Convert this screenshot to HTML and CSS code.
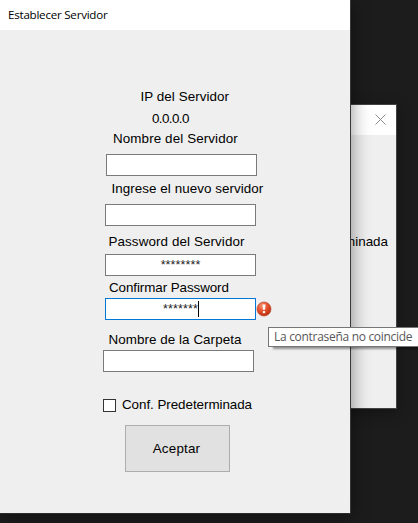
FILE: index.html
```html
<!DOCTYPE html>
<html lang="es">
<head>
<meta charset="utf-8">
<title>Establecer Servidor</title>
<link rel="stylesheet" href="styles.css">
</head>
<body>
<main class="desktop">
  <section class="window back-window">
    <header class="back-title">
      <svg class="close" viewBox="0 0 11 11"><path d="M.5.5l10 10M10.5.5l-10 10"/></svg>
    </header>
    <div class="back-body"><span class="back-label">Conf. Predeterminada</span></div>
  </section>
  <section class="window main-window">
    <header class="title"><span>Establecer Servidor</span></header>
    <form class="form">
      <label class="text ip-label">IP del Servidor</label>
      <span class="text ip-value">0.0.0.0</span>
      <label class="text name-label">Nombre del Servidor</label>
      <div class="field name-field"></div>
      <label class="text new-label">Ingrese el nuevo servidor</label>
      <div class="field new-field"></div>
      <label class="text pass-label">Password del Servidor</label>
      <div class="field pass-field"><span class="stars">********</span></div>
      <label class="text confirm-label">Confirmar Password</label>
      <div class="confirm-row">
        <div class="field focused"><span class="stars">*******</span><i class="caret"></i></div>
        <svg class="error" viewBox="0 0 16 16">
          <defs><radialGradient id="red" cx=".38" cy=".28" r=".75"><stop offset="0" stop-color="#f99570"/><stop offset=".5" stop-color="#e5512c"/><stop offset="1" stop-color="#b92b0c"/></radialGradient></defs>
          <circle cx="8" cy="8" r="7" fill="url(#red)" stroke="#b94a30" stroke-width=".7"/>
          <path d="M6.5 3.5h3l-.5 5.3H7z" fill="#fff"/><rect x="6.8" y="10" width="2.4" height="2.3" rx=".8" fill="#fff"/>
        </svg>
      </div>
      <label class="text folder-label">Nombre de la Carpeta</label>
      <div class="field folder-field"></div>
      <div class="check-row"><i class="checkbox"></i><label class="text check-label">Conf. Predeterminada</label></div>
      <button class="accept" type="button"><span class="text accept-text">Aceptar</span></button>
    </form>
  </section>
  <div class="tooltip"><span>La contraseña no coincide</span></div>
</main>
</body>
</html>
```
FILE: styles.css
```css
* { box-sizing: border-box; }
body { margin: 0; background: #1c1c1c; }
.desktop {
  position: relative;
  width: 418px;
  height: 523px;
  overflow: hidden;
  background: #1c1c1c;
  color: #000;
  font: 13.4px/16px "Liberation Sans", Arial, sans-serif;
}
.window { position: absolute; background: #efefef; }
.main-window {
  left: 0;
  top: 0;
  width: 351px;
  height: 514px;
  border-right: 1px solid #3a3a3a;
  border-bottom: 1px solid #2c2c2c;
  box-shadow: 0 2px 18px rgba(0, 0, 0, .45);
}
.back-window {
  left: 200px;
  top: 104px;
  width: 197px;
  height: 305px;
  border: 1px solid #424242;
  box-shadow: 0 4px 14px rgba(0, 0, 0, .3);
}
.back-title {
  display: flex;
  justify-content: flex-end;
  height: 30px;
  padding: 9px 10px 0 0;
  background: #fff;
}
.close { width: 11px; height: 11px; fill: none; stroke: #8c8c8c; stroke-width: 1; }
.back-body { display: flex; justify-content: flex-end; padding: 99px 8px 0 0; }
.back-label { white-space: nowrap; }
.title {
  display: flex;
  align-items: center;
  height: 30px;
  padding-left: 8px;
  background: #fff;
  font: 11.6px/16px "Open Sans", "Noto Sans", sans-serif;
}
.title span { letter-spacing: -.24px; }
.form { display: flex; flex-direction: column; align-items: flex-start; padding-top: 59px; }
.text { height: 16px; white-space: nowrap; }
.field {
  display: flex;
  justify-content: center;
  width: 151px;
  height: 22px;
  flex: none;
  border: 1px solid #7a7a7a;
  background: #fff;
}
.ip-label { margin-left: 140.5px; letter-spacing: .06px; }
.ip-value { margin: 6px 0 4px 152px; letter-spacing: -.6px; }
.name-label { margin-left: 113px; letter-spacing: .11px; }
.name-field { margin: 7px 0 5px 106px; }
.new-label { margin-left: 111.5px; letter-spacing: .06px; }
.new-field { margin: 7px 0 8px 105px; }
.pass-label { margin-left: 108.5px; letter-spacing: .1px; }
.pass-field { margin: 4px 0 4px 105px; }
.confirm-label { margin: 0 0 2px 109px; letter-spacing: -.08px; }
.confirm-row { display: flex; align-items: center; margin-left: 105px; }
.folder-label { margin: 12px 0 2px 108.5px; letter-spacing: .06px; }
.folder-field { margin-left: 103px; }
.focused { padding-left: 1px; border-color: #0078d7; }
.stars { font-size: 12.5px; line-height: 20px; letter-spacing: .1px; color: #222; }
.caret { width: 1px; height: 16px; margin-top: 2px; background: #000; }
.error { width: 16px; height: 16px; }
.check-row { display: flex; align-items: center; margin: 25px 0 0 103px; }
.checkbox { width: 13px; height: 13px; margin-right: 6px; border: 1px solid #333; background: #fff; }
.check-label { letter-spacing: -.05px; }
.accept {
  display: flex;
  align-items: center;
  justify-content: center;
  width: 105px;
  height: 47px;
  margin: 12px 0 0 125px;
  padding: 0 2px 0 0;
  border: 1px solid #adadad;
  background: #e1e1e1;
  color: #000;
  font: inherit;
}
.accept-text { letter-spacing: .2px; }
.tooltip {
  position: absolute;
  left: 268px;
  top: 327px;
  width: 160px;
  height: 20px;
  padding-left: 5px;
  border: 1px solid #767676;
  background: #fff;
  box-shadow: 4px 3px 2px -1px rgba(0, 0, 0, .4);
  color: #575757;
  font: 12px/18px "Open Sans", "Noto Sans", sans-serif;
  letter-spacing: -.3px;
  white-space: nowrap;
}
```
